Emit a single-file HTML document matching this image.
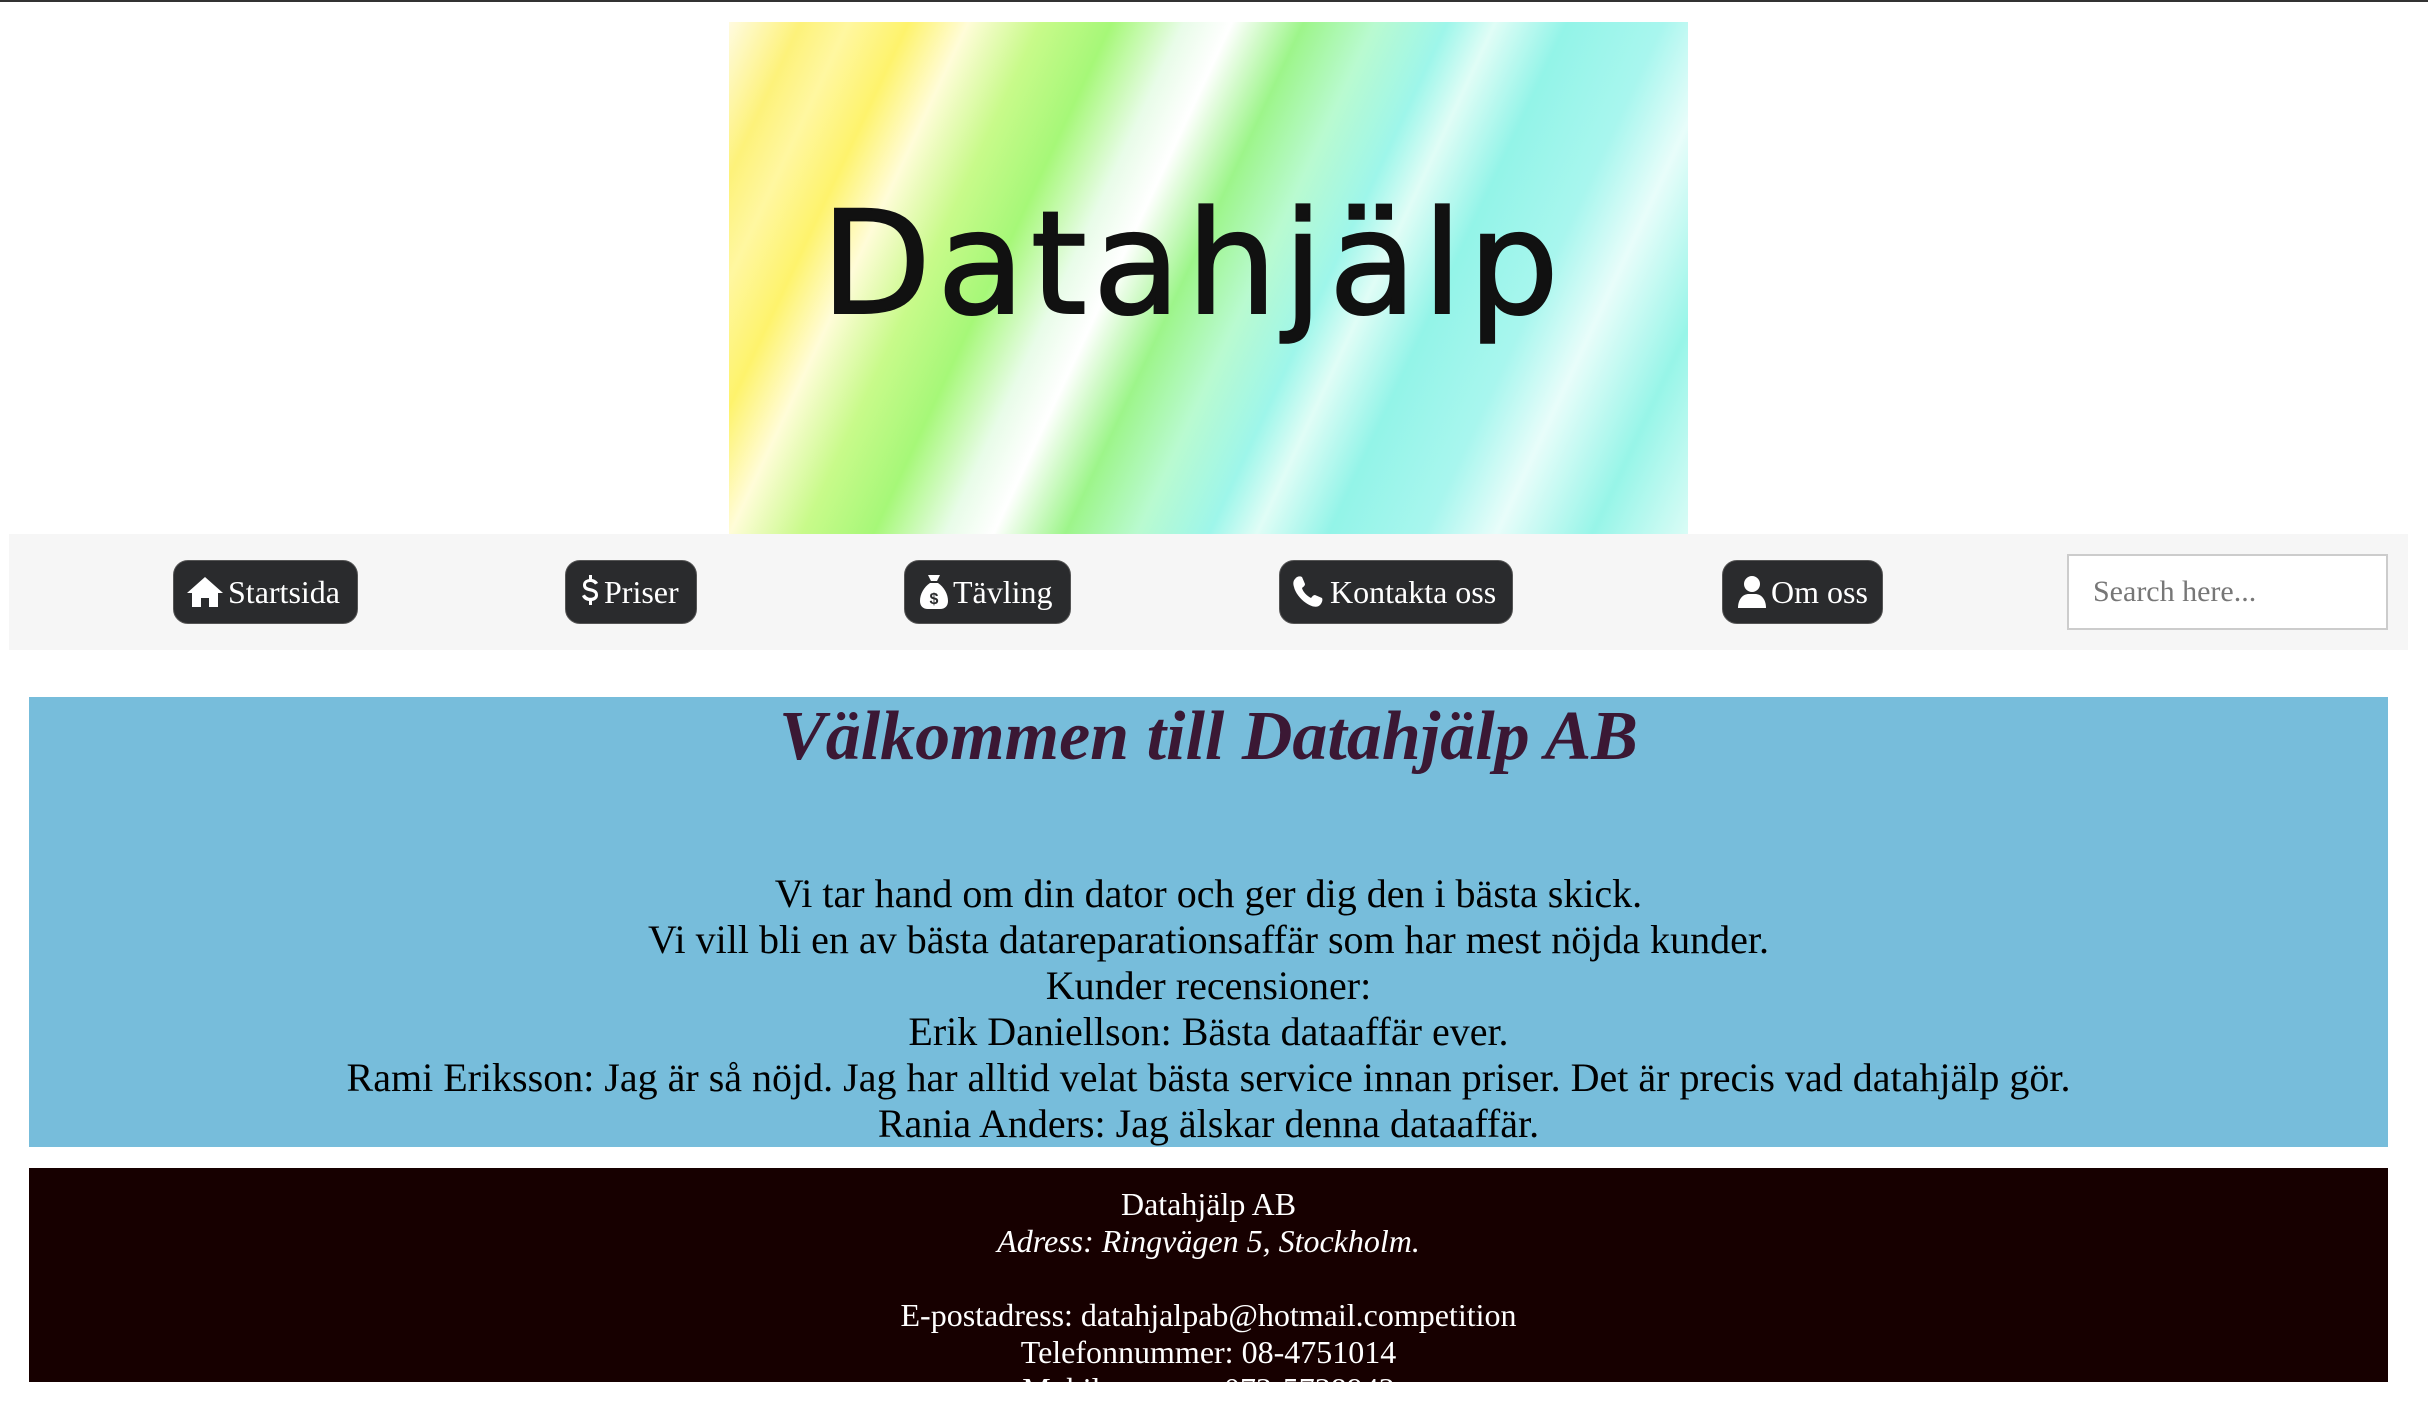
<!DOCTYPE html>
<html><head><meta charset="utf-8"><style>
*{margin:0;padding:0;box-sizing:border-box}
body{width:2428px;height:1382px;overflow:hidden;background:#fff;font-family:"Liberation Serif",serif;position:relative}
.top{position:absolute;left:0;top:0;width:2428px;height:2px;background:#333}
.logo{position:absolute;left:729px;top:22px;width:959px;height:512px;overflow:hidden;
background:linear-gradient(115deg,#fffbe0 0%,#fdf27a 6%,#fff7a0 10%,#fef36c 15%,#fffcd8 20%,#c8fa8a 26%,#a6f878 32%,#e8fce8 38%,#ffffff 42%,#9df58a 48%,#b9fad0 54%,#9ef6ea 60%,#e0fdf6 64%,#93f4e8 70%,#a8f6ee 78%,#e8fdfa 84%,#97f5e8 92%,#dafcf6 100%)}
.logo span{position:absolute;left:92px;top:158px;font-family:"DejaVu Sans",sans-serif;font-size:143px;letter-spacing:6px;color:#111;-webkit-text-stroke:2px #111}
.nav{position:absolute;left:9px;top:534px;width:2399px;height:116px;background:#f6f6f6}
.btn{position:absolute;top:560px;height:64px;background:#2a2b2d;border:1px solid #555;border-radius:15px;color:#fff;font-size:32px;display:flex;align-items:center;padding-left:12px;white-space:nowrap}
.btn svg{fill:#fff;margin-right:4px}
.search{position:absolute;left:2067px;top:554px;width:321px;height:76px;background:#fff;border:2px solid #ccc;font-size:30px;color:#777;padding-left:24px;line-height:72px}
.blue{position:absolute;left:29px;top:697px;width:2359px;height:450px;background:#77bddb;text-align:center}
.blue h1{font-style:italic;font-weight:bold;font-size:70px;color:#3b1834;position:absolute;top:0;width:100%;line-height:80px}
.blue p{position:absolute;top:174px;width:100%;font-size:40px;line-height:46px;color:#000}
.foot{position:absolute;left:29px;top:1168px;width:2359px;height:214px;background:#170000;color:#fff;text-align:center;font-size:32px;line-height:37px;padding-top:18px}
</style></head><body>
<div class="top"></div>
<div class="logo"><span>Datahjälp</span></div>
<div class="nav"></div>
<div class="btn" style="left:173px;width:185px"><svg width="38" height="32" viewBox="0 0 38 32"><path d="M19 1 L37 17 L32 17 L32 31 L23 31 L23 22 L15 22 L15 31 L6 31 L6 17 L1 17 Z"/></svg>Startsida</div>
<div class="btn" style="left:565px;width:132px;padding-left:14px"><svg width="20" height="36" viewBox="0 0 20 36"><path d="M9 1h3v4c3 .5 5 2 6 4l-3 1.5c-1-1.5-2.5-2.5-5-2.5-3 0-4 1.5-4 3 0 2 2 2.6 5 3.3 4 1 7 2.5 7 6.7 0 3.5-2.5 5.5-6 6v4H9v-4c-4-.5-6-2.5-7-5l3-1.5c1 2 3 3.3 5.5 3.3 3 0 4.5-1.3 4.5-3 0-2-1.8-2.7-5-3.4-4-.9-7-2.300-7-6.3 0-3.3 2.2-5.4 6-6z"/></svg>Priser</div>
<div class="btn" style="left:904px;width:167px;padding-left:14px"><svg width="30" height="36" viewBox="0 0 30 36"><path d="M9 1h12l-3 6h-6zM11 9h8c6 4 10 11 10 18 0 5-3 8-8 8H9c-5 0-8-3-8-8 0-7 4-14 10-18z"/><text x="15" y="30" font-size="16" font-family="Liberation Sans" text-anchor="middle" fill="#2a2b2d" font-weight="bold">$</text></svg>Tävling</div>
<div class="btn" style="left:1279px;width:234px;padding-left:12px"><svg width="34" height="34" viewBox="0 0 34 34"><path d="M3 4c2-3 5-3 7-2l3 7c0 2-2 3-3 4 1 4 5 8 9 10 1-1 2-3 4-3l7 3c1 2 0 5-2 7-3 3-8 2-14-2C8 24 3 17 2 12 1 9 1 6 3 4z"/></svg>Kontakta oss</div>
<div class="btn" style="left:1722px;width:161px;padding-left:14px"><svg width="30" height="34" viewBox="0 0 30 34"><circle cx="15" cy="9" r="8"/><path d="M1 33c0-9 5-14 11-14h6c6 0 11 5 11 14z"/></svg>Om oss</div>
<div class="search">Search here...</div>
<div class="blue">
<h1>Välkommen till Datahjälp AB</h1>
<p>Vi tar hand om din dator och ger dig den i bästa skick.<br>Vi vill bli en av bästa datareparationsaffär som har mest nöjda kunder.<br>Kunder recensioner:<br>Erik Daniellson: Bästa dataaffär ever.<br>Rami Eriksson: Jag är så nöjd. Jag har alltid velat bästa service innan priser. Det är precis vad datahjälp gör.<br>Rania Anders: Jag älskar denna dataaffär.</p>
</div>
<div class="foot">Datahjälp AB<br><i>Adress: Ringvägen 5, Stockholm.</i><br><br>E-postadress: datahjalpab@hotmail.competition<br>Telefonnummer: 08-4751014<br>Mobilnummer: 072-5738942</div>
</body></html>
